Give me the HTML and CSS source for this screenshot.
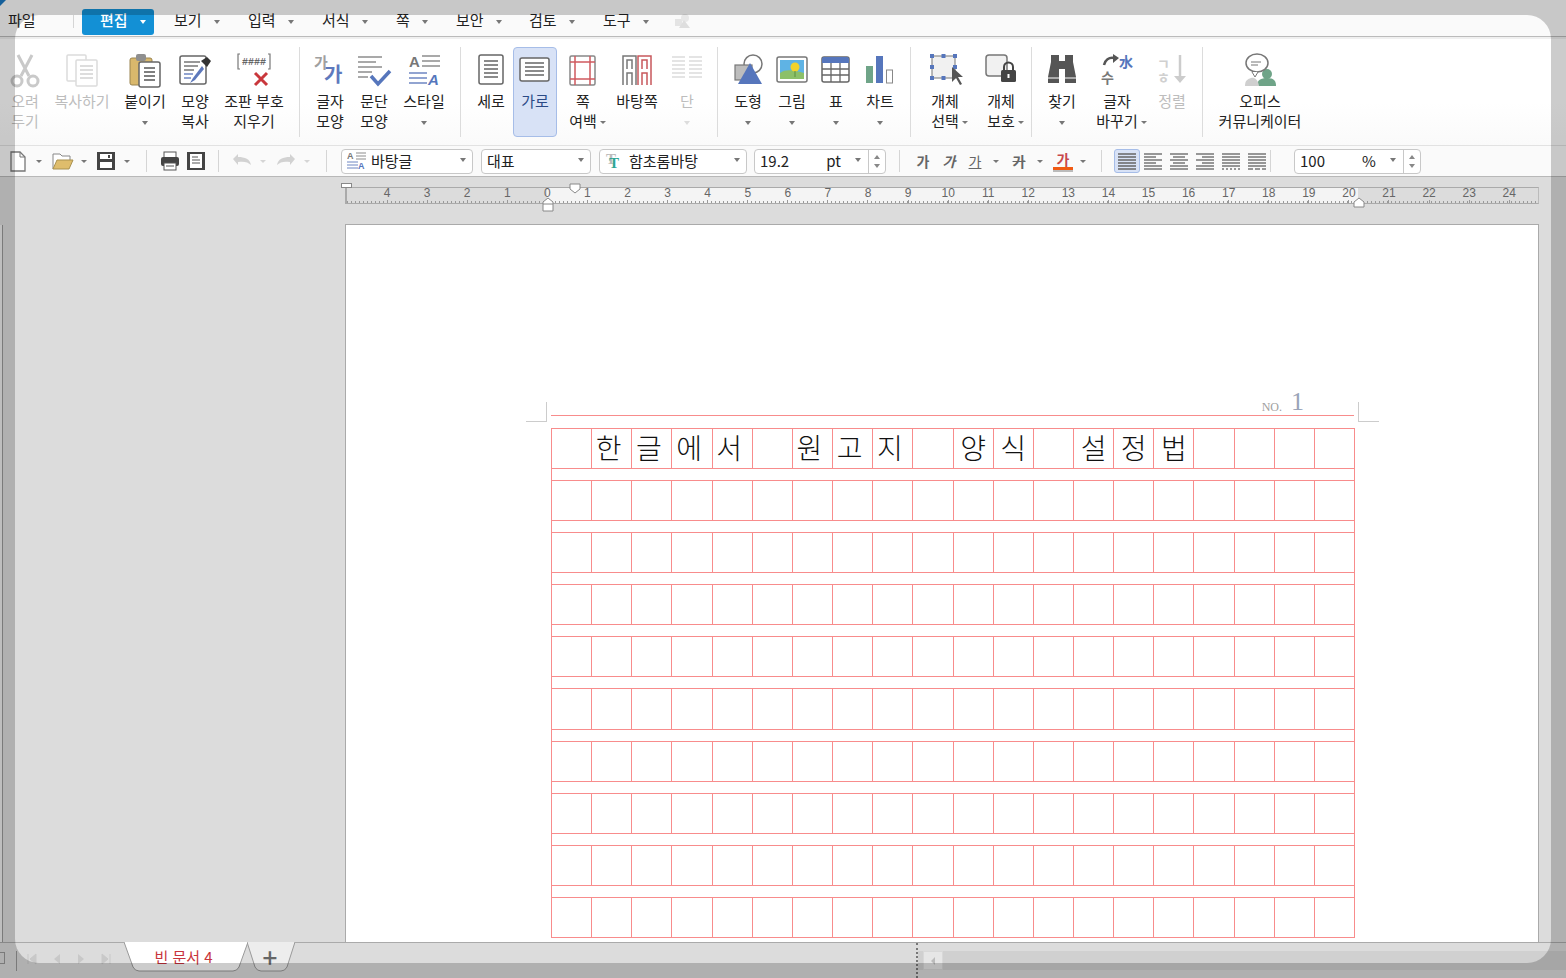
FILE: index.html
```html
<!DOCTYPE html>
<html lang="ko">
<head>
    <meta charset="UTF-8">
    <title>빈 문서 4</title>
    <link rel="stylesheet" href="styles.css">
</head>
<body>
<div class="app">

    <!-- Menu bar -->
    <div class="menu-bar">
        <span class="menu-file">파일</span>
        <span class="menu-sep"></span>
        <span class="menu-active">편집<i class="caret caret-white"></i></span>
        <span class="menu-item">보기<i class="caret"></i></span>
        <span class="menu-item">입력<i class="caret"></i></span>
        <span class="menu-item">서식<i class="caret"></i></span>
        <span class="menu-item menu-short">쪽<i class="caret"></i></span>
        <span class="menu-item menu-mid">보안<i class="caret"></i></span>
        <span class="menu-item">검토<i class="caret"></i></span>
        <span class="menu-item">도구<i class="caret"></i></span>
        <svg class="menu-shapes" viewBox="0 0 18 16"><rect x="1" y="6" width="7" height="7" fill="#e4e4e4"/><circle cx="11" cy="5" r="4" fill="#e8e8e8"/><path d="M10 7l6 8H5z" fill="#dedede"/></svg>
    </div>

    <!-- Ribbon -->
    <div class="ribbon">
        <div class="group group-first">
            <div class="tool w44 off">
                <svg class="ico" viewBox="0 0 36 36" fill="none" stroke="#c9c9c9" stroke-width="3"><path d="M11 3l11 21M25 3L14 24"/><circle cx="10" cy="29" r="5"/><circle cx="26" cy="29" r="5"/></svg>
                <span>오려</span><span>두기</span>
            </div>
            <div class="tool w70 off">
                <svg class="ico" viewBox="0 0 36 36" fill="#fff" stroke="#dcdcdc" stroke-width="1.5"><rect x="3" y="3" width="19" height="26" rx="1"/><rect x="12" y="8" width="21" height="26" rx="1"/><path d="M16 14h13M16 18h13M16 22h13M16 26h13" stroke="#d2d2d2"/></svg>
                <span>복사하기</span>
            </div>
            <div class="tool w56">
                <svg class="ico" viewBox="0 0 36 36"><rect x="3" y="6" width="22" height="27" rx="2" fill="#d9b86c" stroke="#9a8450"/><rect x="9" y="2" width="10" height="7" rx="2" fill="#8f8f8f"/><rect x="12" y="10" width="21" height="25" rx="2" fill="#fff" stroke="#666" stroke-width="1.5"/><path d="M17 16h11M17 20h11M17 24h11M17 28h11" stroke="#555" stroke-width="1.5"/></svg>
                <span>붙이기</span><i class="caret caret-row"></i>
            </div>
            <div class="tool w44">
                <svg class="ico" viewBox="0 0 36 36"><rect x="3" y="4" width="26" height="28" rx="2" fill="#fff" stroke="#666" stroke-width="1.5"/><path d="M7 10h16M7 14h14M7 18h10" stroke="#777" stroke-width="1.5"/><path d="M7 22h9M7 26h7" stroke="#6f86c2" stroke-width="1.5"/><path d="M25 14l-9 12-3 5 5-3 9-11z" fill="#5d78bb"/><path d="M24 9l6-4 4 4-4 6z" fill="#333"/></svg>
                <span>모양</span><span>복사</span>
            </div>
            <div class="tool w74">
                <svg class="ico ico-wide" viewBox="0 0 38 36"><path d="M5 17H3V2h2M33 17h2V2h-2" fill="none" stroke="#777" stroke-width="1.2"/><text x="19" y="13" class="ico-hash">####</text><path d="M20 21l12 12M32 21L20 33" stroke="#c9373c" stroke-width="3"/></svg>
                <span>조판 부호</span><span>지우기</span>
            </div>
        </div>
        <div class="group">
            <div class="tool w44">
                <svg class="ico" viewBox="0 0 36 36"><text x="2" y="16" class="ico-ga" fill="#a0a0a0">가</text><text x="12" y="30" class="ico-ga ico-ga-big" fill="#5e79bd">가</text></svg>
                <span>글자</span><span>모양</span>
            </div>
            <div class="tool w44">
                <svg class="ico" viewBox="0 0 36 36" fill="none"><path d="M2 5h24M2 10h18M2 15h24M2 20h14M2 25h10" stroke="#8d8d8d" stroke-width="1.5"/><path d="M15 24l7 8 12-13" stroke="#5676bc" stroke-width="3.5"/></svg>
                <span>문단</span><span>모양</span>
            </div>
            <div class="tool w56">
                <svg class="ico" viewBox="0 0 36 36"><text x="3" y="15" class="ico-a" fill="#777">A</text><path d="M16 4h18M16 9h18M16 14h18" stroke="#8d8d8d" stroke-width="1.5"/><path d="M3 21h18M3 26h18M3 31h18" stroke="#6f86c2" stroke-width="1.5"/><text x="22" y="33" class="ico-a ico-it" fill="#5676bc">A</text></svg>
                <span>스타일</span><i class="caret caret-row"></i>
            </div>
        </div>
        <div class="group group-page">
            <div class="tool w44">
                <svg class="ico" viewBox="0 0 36 36"><rect x="6" y="3" width="24" height="29" rx="2" fill="#fff" stroke="#666" stroke-width="1.5"/><path d="M11 9h14M11 13h14M11 17h14M11 21h14M11 25h14" stroke="#666" stroke-width="1.5"/></svg>
                <span>세로</span>
            </div>
            <div class="tool w44 on">
                <svg class="ico" viewBox="0 0 36 36"><rect x="3" y="6" width="29" height="23" rx="2" fill="#fff" stroke="#666" stroke-width="1.5"/><path d="M8 11h19M8 15h19M8 19h19M8 23h19" stroke="#666" stroke-width="1.5"/></svg>
                <span>가로</span>
            </div>
            <div class="tool w44 after-on">
                <svg class="ico" viewBox="0 0 36 36" fill="none"><rect x="5" y="4" width="25" height="29" rx="1.5" fill="#fff" stroke="#888" stroke-width="1.5"/><path d="M10 4v29M25 4v29M5 10h25M5 27h25" stroke="#cf5a5f" stroke-width="1.5"/></svg>
                <span>쪽</span><span>여백<i class="caret caret-inline"></i></span>
            </div>
            <div class="tool w60">
                <svg class="ico" viewBox="0 0 36 36" fill="none"><path d="M4 33V4h13v29M8 33V21h5v12M8 17V8h5v9" stroke="#777" stroke-width="1.5"/><path d="M19 33V4h13v29M23 33V21h5v12M23 17V8h5v9" stroke="#c8585c" stroke-width="1.5"/></svg>
                <span>바탕쪽</span>
            </div>
            <div class="tool w40 off">
                <svg class="ico" viewBox="0 0 36 36"><path d="M3 5h13M3 9h13M3 13h13M3 17h13M3 21h13M3 25h13M20 5h13M20 9h13M20 13h13M20 17h13M20 21h13M20 25h13" stroke="#dcdcdc" stroke-width="1.5"/></svg>
                <span>단</span><i class="caret caret-row caret-off"></i>
            </div>
        </div>
        <div class="group">
            <div class="tool w44">
                <svg class="ico" viewBox="0 0 36 36"><circle cx="23" cy="12" r="9" fill="#fff" stroke="#777" stroke-width="1.5"/><rect x="5" y="13" width="17" height="15" fill="#bdbdbd" stroke="#777" stroke-width="1.2"/><path d="M20 11l12 21H8z" fill="#5676bc"/></svg>
                <span>도형</span><i class="caret caret-row"></i>
            </div>
            <div class="tool w44">
                <svg class="ico" viewBox="0 0 36 36"><rect x="3" y="5" width="30" height="25" rx="2" fill="#fff" stroke="#777" stroke-width="1.5"/><rect x="6" y="8" width="24" height="19" fill="#5fb3e4"/><path d="M6 27v-6c6-4 12-3 24 0v6z" fill="#8cc069"/><circle cx="21" cy="15" r="4.5" fill="#f4d22a"/><path d="M21 19v6" stroke="#5d8f3e"/></svg>
                <span>그림</span><i class="caret caret-row"></i>
            </div>
            <div class="tool w44">
                <svg class="ico" viewBox="0 0 36 36"><rect x="4" y="5" width="27" height="25" rx="2" fill="#fff" stroke="#666" stroke-width="1.5"/><path d="M4 7a2 2 0 012-2h23a2 2 0 012 2v4H4z" fill="#5676bc"/><path d="M4 17h27M4 23h27M13 11v19M22 11v19" stroke="#666" stroke-width="1.3"/></svg>
                <span>표</span><i class="caret caret-row"></i>
            </div>
            <div class="tool w44">
                <svg class="ico" viewBox="0 0 36 36"><rect x="4" y="14" width="7" height="17" fill="#6fa488"/><rect x="14" y="4" width="7" height="27" fill="#5676bc"/><rect x="24.500" y="18" width="6" height="13" fill="#fff" stroke="#888"/></svg>
                <span>차트</span><i class="caret caret-row"></i>
            </div>
        </div>
        <div class="group group-tight">
            <div class="tool w56">
                <svg class="ico" viewBox="0 0 36 36"><rect x="5" y="4" width="23" height="22" fill="#f1f1f1" stroke="#777"/><path d="M3 2h4v4H3zM14.500 2h4v4h-4zM26 2h4v4h-4zM3 13h4v4H3zM26 13h4v4h-4zM3 24h4v4H3zM14.500 24h4v4h-4z" fill="#5676bc"/><path d="M25 15v15l4-4 4 7 2-1-4-7h5z" fill="#555"/></svg>
                <span>개체</span><span>선택<i class="caret caret-inline"></i></span>
            </div>
            <div class="tool w56">
                <svg class="ico" viewBox="0 0 36 36"><rect x="3" y="3" width="21" height="21" rx="3" fill="#f1f1f1" stroke="#777" stroke-width="1.5"/><rect x="18" y="18" width="15" height="12" rx="1.5" fill="#444"/><path d="M21 18v-3a4.500 4.500 0 019 0v3" fill="none" stroke="#444" stroke-width="2"/><rect x="24.500" y="22" width="2" height="4" fill="#fff"/></svg>
                <span>개체</span><span>보호<i class="caret caret-inline"></i></span>
            </div>
        </div>
        <div class="group">
            <div class="tool w44">
                <svg class="ico" viewBox="0 0 36 36" fill="#555"><path d="M7 3h8v6h6V3h8v7l3 15v6H21V17h-6v14H4v-6l3-15z"/><path d="M4 26h11M21 26h11" stroke="#fff"/></svg>
                <span>찾기</span><i class="caret caret-row"></i>
            </div>
            <div class="tool w66">
                <svg class="ico" viewBox="0 0 36 36"><path d="M5 13c1-5 5-8 10-7" fill="none" stroke="#555" stroke-width="2.500"/><path d="M14 2l6 4-6 5z" fill="#555"/><text x="20" y="15" class="ico-ji" fill="#5676bc">水</text><text x="2" y="31" class="ico-ji" fill="#777">수</text></svg>
                <span>글자</span><span>바꾸기<i class="caret caret-inline"></i></span>
            </div>
            <div class="tool w44 off">
                <svg class="ico" viewBox="0 0 36 36"><text x="3" y="17" class="ico-ji" fill="#d0d0d0">ㄱ</text><text x="3" y="31" class="ico-ji" fill="#d0d0d0">ㅎ</text><path d="M26 3v24" stroke="#ccc" stroke-width="2.500"/><path d="M20 24h12l-6 7z" fill="#ccc"/></svg>
                <span>정렬</span>
            </div>
        </div>
        <div class="group group-last">
            <div class="tool w100">
                <svg class="ico" viewBox="0 0 36 36"><circle cx="25" cy="22" r="5" fill="#6fa488"/><path d="M15 34c0-6 4-8 10-8s9 2 9 8z" fill="#6fa488"/><path d="M3 34c0-6 3-7 6-8s7 1 8 8z" fill="#cfcfcf"/><ellipse cx="15" cy="11" rx="11" ry="9" fill="#fff" stroke="#777" stroke-width="1.5"/><path d="M10 20l3 5 3-5" fill="#fff" stroke="#777"/><path d="M9 10h10M9 13h7" stroke="#777"/></svg>
                <span>오피스</span><span>커뮤니케이터</span>
            </div>
        </div>
    </div>

    <!-- Formatting toolbar -->
    <div class="toolbar">
        <svg class="tb-ico" viewBox="0 0 22 22"><path d="M4 2h9l5 5v14H4z" fill="#fff" stroke="#777" stroke-width="1.3"/><path d="M13 2v5h5" fill="none" stroke="#777"/></svg>
        <i class="tb-caret"></i>
        <svg class="tb-ico tb-open" viewBox="0 0 22 22"><path d="M1 19V4h7l2 2h8v4" fill="#fff" stroke="#888"/><path d="M1 19l4-9h16l-4 9z" fill="#dfbd6c" stroke="#a9914f"/></svg>
        <i class="tb-caret"></i>
        <svg class="tb-ico tb-save" viewBox="0 0 22 22"><path d="M2 2h18v18H2z" fill="#444"/><rect x="5" y="12" width="12" height="6" fill="#fff"/><rect x="5" y="4" width="12" height="5" fill="#fff"/><rect x="13" y="5" width="2" height="3" fill="#444"/></svg>
        <i class="tb-caret"></i>
        <span class="tb-sep tb-sep-file"></span>
        <svg class="tb-ico" viewBox="0 0 22 22"><rect x="5" y="2" width="12" height="6" fill="#fff" stroke="#555"/><rect x="2" y="7" width="18" height="9" rx="2" fill="#444"/><rect x="5" y="13" width="12" height="7" fill="#fff" stroke="#555"/><path d="M7 16h8" stroke="#555"/></svg>
        <svg class="tb-ico tb-mini" viewBox="0 0 22 22"><rect x="2" y="2" width="18" height="18" fill="#444"/><rect x="5" y="4" width="12" height="14" fill="#fff"/><path d="M7 7h6M7 10h8M7 13h8" stroke="#555"/></svg>
        <span class="tb-sep tb-sep-print"></span>
        <svg class="tb-ico" viewBox="0 0 22 22"><path d="M2 9l5-5v3c7 0 12 2 13 8-3-3-7-4-13-3v3z" fill="#d2d2d2"/></svg>
        <i class="tb-caret tb-caret-off"></i>
        <svg class="tb-ico tb-redo" viewBox="0 0 22 22"><path d="M20 9l-5-5v3C8 7 3 9 2 15c3-3 7-4 13-3v3z" fill="#d2d2d2"/></svg>
        <i class="tb-caret tb-caret-off"></i>
        <span class="tb-sep tb-sep-sel"></span>

        <div class="select sel-style">
            <svg class="sel-ico" viewBox="0 0 20 20"><text x="0" y="9" class="ico-small" fill="#777">A</text><path d="M9 3h10M9 6h10M9 9h10" stroke="#8d8d8d"/><path d="M0 12h11M0 15h11M0 18h11" stroke="#6f86c2"/><text x="11" y="19" class="ico-small ico-it" fill="#5676bc">A</text></svg>
            <span class="sel-text">바탕글</span><i class="caret"></i>
        </div>
        <div class="select sel-rep">
            <span class="sel-text">대표</span><i class="caret"></i>
        </div>
        <div class="select sel-font">
            <svg class="sel-ico" viewBox="0 0 20 20"><text x="1" y="14" class="ico-t" fill="#bcbcbc">T</text><text x="4" y="18" class="ico-t" fill="#2ea594">T</text></svg>
            <span class="sel-text">함초롬바탕</span><i class="caret"></i>
        </div>
        <div class="select sel-size">
            <span class="sel-text">19.2</span><span class="sel-unit">pt</span><i class="caret"></i>
            <span class="spin"><i class="spin-up"></i><i class="spin-down"></i></span>
        </div>
        <span class="tb-sep tb-sep-fmt"></span>

        <span class="fmt fmt-bold">가</span>
        <span class="fmt fmt-italic">가</span>
        <span class="fmt fmt-under">가</span>
        <i class="tb-caret tb-caret-tight"></i>
        <span class="fmt fmt-strike">가</span>
        <i class="tb-caret tb-caret-tight"></i>
        <span class="fmt fmt-color">가</span>
        <i class="tb-caret"></i>
        <span class="tb-sep tb-sep-align"></span>

        <span class="align-btn align-on"><svg viewBox="0 0 20 18"><path d="M1 2h18M1 5h18M1 8h18M1 11h18M1 14h18M1 17h18" stroke="#666" stroke-width="1.6"/></svg></span>
        <span class="align-btn"><svg viewBox="0 0 20 18"><path d="M1 2h18M1 5h12M1 8h18M1 11h12M1 14h18M1 17h18" stroke="#777" stroke-width="1.6"/></svg></span>
        <span class="align-btn"><svg viewBox="0 0 20 18"><path d="M1 2h18M4 5h12M1 8h18M4 11h12M1 14h18M1 17h18" stroke="#777" stroke-width="1.6"/></svg></span>
        <span class="align-btn"><svg viewBox="0 0 20 18"><path d="M1 2h18M7 5h12M1 8h18M7 11h12M1 14h18M1 17h18" stroke="#777" stroke-width="1.6"/></svg></span>
        <span class="align-btn"><svg viewBox="0 0 20 18"><path d="M1 2h18M1 5h18M1 8h18M1 11h18M1 14h18" stroke="#777" stroke-width="1.6"/><path d="M1 17h18" stroke="#777" stroke-width="1.6" stroke-dasharray="2 2"/></svg></span>
        <span class="align-btn"><svg viewBox="0 0 20 18"><path d="M1 2h18M1 5h18M1 8h18M1 11h18M1 14h18" stroke="#777" stroke-width="1.6"/><path d="M1 17h18" stroke="#777" stroke-width="1.6" stroke-dasharray="5 2"/></svg></span>
        <span class="tb-sep tb-sep-zoom"></span>

        <div class="select sel-zoom">
            <span class="sel-text">100</span><span class="sel-unit">%</span><i class="caret"></i>
            <span class="spin"><i class="spin-up"></i><i class="spin-down"></i></span>
        </div>
    </div>

    <!-- Document area -->
    <div class="workspace">
        <div class="vruler"></div>
        <div class="ruler">
            <span>4</span><span>3</span><span>2</span><span>1</span><span>0</span><span>1</span><span>2</span><span>3</span><span>4</span><span>5</span><span>6</span><span>7</span><span>8</span><span>9</span><span>10</span><span>11</span><span>12</span><span>13</span><span>14</span><span>15</span><span>16</span><span>17</span><span>18</span><span>19</span><span>20</span><span>21</span><span>22</span><span>23</span><span>24</span>
            <i class="mark mark-tl"></i>
            <svg class="mark mark-indent" viewBox="0 0 12 11"><path d="M1 1h10v5l-5 4-5-4z" fill="#fff" stroke="#888"/></svg>
            <svg class="mark mark-left" viewBox="0 0 12 15"><path d="M1 14V5l5-4 5 4v9z" fill="#fff" stroke="#888"/><path d="M1 7h10" stroke="#888"/></svg>
            <svg class="mark mark-right" viewBox="0 0 12 11"><path d="M1 10V5l5-4 5 4v5z" fill="#fff" stroke="#888"/></svg>
        </div>
        <div class="tabstops"></div>

        <div class="page">
            <div class="sheet-head">
                <i class="crop crop-left"></i>
                <i class="crop crop-right"></i>
                <span class="no-label">NO.</span><span class="no-value">1</span>
            </div>
            <div class="sheet">
                <div class="row"><span></span><span class="lead">한</span><span class="lead">글</span><span class="lead">에</span><span class="lead">서</span><span></span><span class="lead">원</span><span class="lead">고</span><span class="lead">지</span><span></span><span>양</span><span>식</span><span></span><span>설</span><span>정</span><span>법</span><span></span><span></span><span></span><span></span></div>
                <div class="row"><span></span><span></span><span></span><span></span><span></span><span></span><span></span><span></span><span></span><span></span><span></span><span></span><span></span><span></span><span></span><span></span><span></span><span></span><span></span><span></span></div>
                <div class="row"><span></span><span></span><span></span><span></span><span></span><span></span><span></span><span></span><span></span><span></span><span></span><span></span><span></span><span></span><span></span><span></span><span></span><span></span><span></span><span></span></div>
                <div class="row"><span></span><span></span><span></span><span></span><span></span><span></span><span></span><span></span><span></span><span></span><span></span><span></span><span></span><span></span><span></span><span></span><span></span><span></span><span></span><span></span></div>
                <div class="row"><span></span><span></span><span></span><span></span><span></span><span></span><span></span><span></span><span></span><span></span><span></span><span></span><span></span><span></span><span></span><span></span><span></span><span></span><span></span><span></span></div>
                <div class="row"><span></span><span></span><span></span><span></span><span></span><span></span><span></span><span></span><span></span><span></span><span></span><span></span><span></span><span></span><span></span><span></span><span></span><span></span><span></span><span></span></div>
                <div class="row"><span></span><span></span><span></span><span></span><span></span><span></span><span></span><span></span><span></span><span></span><span></span><span></span><span></span><span></span><span></span><span></span><span></span><span></span><span></span><span></span></div>
                <div class="row"><span></span><span></span><span></span><span></span><span></span><span></span><span></span><span></span><span></span><span></span><span></span><span></span><span></span><span></span><span></span><span></span><span></span><span></span><span></span><span></span></div>
                <div class="row"><span></span><span></span><span></span><span></span><span></span><span></span><span></span><span></span><span></span><span></span><span></span><span></span><span></span><span></span><span></span><span></span><span></span><span></span><span></span><span></span></div>
                <div class="row"><span></span><span></span><span></span><span></span><span></span><span></span><span></span><span></span><span></span><span></span><span></span><span></span><span></span><span></span><span></span><span></span><span></span><span></span><span></span><span></span></div>
            </div>
        </div>
    </div>

    <!-- Tabs and horizontal scrollbar -->
    <div class="bottom-bar">
        <div class="tab-area">
            <span class="corner-box"></span>
            <span class="tab-nav-line"></span>
            <div class="tab-nav">
                <svg viewBox="0 0 10 12"><path d="M1 1v10M9 1L3 6l6 5z" fill="#c8c8c8" stroke="#c8c8c8"/></svg>
                <svg viewBox="0 0 10 12"><path d="M8 1L2 6l6 5z" fill="#c8c8c8"/></svg>
                <svg viewBox="0 0 10 12"><path d="M2 1l6 5-6 5z" fill="#c8c8c8"/></svg>
                <svg viewBox="0 0 10 12"><path d="M9 1v10M1 1l6 5-6 5z" fill="#c8c8c8" stroke="#c8c8c8"/></svg>
            </div>
            <div class="doc-tab">
                <svg class="tab-shape" viewBox="0 0 124 30"><path d="M0 0l9 25q2 4 6 4h94q4 0 6-4l9-25" fill="#fff" stroke="#999"/></svg>
                <span>빈 문서 4</span>
            </div>
            <div class="add-tab">
                <svg class="tab-shape" viewBox="0 0 48 30"><path d="M0 0l8 25q2 4 6 4h20q4 0 6-4l8-25" fill="#ededed" stroke="#999"/></svg>
                <span>+</span>
            </div>
        </div>
        <span class="splitter"></span>
        <div class="hscroll">
            <span class="scroll-btn"><i></i></span>
        </div>
    </div>

    <svg class="corner-logo" viewBox="0 0 6 6"><path d="M0 0h6L0 6z" fill="#1b78c2"/></svg>
    <div class="frame"></div>
</div>
</body>
</html>
```

FILE: styles.css
```css
/* Reset */
* {
    margin: 0;
    padding: 0;
    box-sizing: border-box;
}

html, body {
    height: 100%;
    overflow: hidden;
}

body {
    font-family: "Noto Sans CJK KR", "Noto Sans", sans-serif;
    font-size: 15px;
    color: #222;
}

i {
    font-style: normal;
}

.app {
    position: relative;
    height: 100vh;
    display: flex;
    flex-direction: column;
    overflow: hidden;
    background-color: #dcdcdc;
}

/* Dimmed frame laid over the window edge */
.frame {
    position: absolute;
    top: 15px;
    left: 15px;
    right: 15px;
    bottom: 15px;
    border-radius: 24px;
    box-shadow: 0 0 0 60px rgba(0, 0, 0, 0.2);
    pointer-events: none;
}

.corner-logo {
    position: absolute;
    top: 0;
    left: 0;
    width: 6px;
    height: 6px;
}

/* Carets */
.caret {
    display: inline-block;
    width: 0;
    height: 0;
    border-left: 3.5px solid transparent;
    border-right: 3.5px solid transparent;
    border-top: 4px solid #777;
}

.caret-white {
    border-top-color: #fff;
    margin-left: 12px;
}

.caret-row {
    margin-top: 10px;
}

.caret-off {
    border-top-color: #ddd;
}

/* Hangs past the label so the label stays centred */
.caret-inline {
    margin: 0 -9px 0 3px;
    vertical-align: middle;
    border-left-width: 3px;
    border-right-width: 3px;
    border-top-width: 3px;
}

/* Menu bar */
.menu-bar {
    height: 37px;
    flex-shrink: 0;
    display: flex;
    align-items: flex-start;
    padding: 9px 0 0 8px;
    background-color: #fafafa;
    border-bottom: 1px solid #bbb;
    line-height: 22px;
}

.menu-file {
    width: 65px;
}

.menu-sep {
    width: 1px;
    height: 13px;
    margin-top: 6px;
    background-color: #d5d5d5;
}

.menu-active {
    width: 72px;
    height: 26px;
    margin: 0 20px 0 8px;
    padding-left: 18px;
    background-color: #1390d5;
    border-radius: 3px;
    color: #fff;
    font-weight: 500;
}

.menu-active .caret {
    vertical-align: middle;
}

.menu-item {
    width: 74px;
}

.menu-item .caret {
    margin-left: 12px;
    vertical-align: middle;
}

.menu-short {
    width: 60px;
}

.menu-mid {
    width: 73px;
}

.menu-shapes {
    width: 18px;
    height: 16px;
    margin: 4px 0 0 -3px;
}

/* Ribbon */
.ribbon {
    height: 109px;
    flex-shrink: 0;
    display: flex;
    padding-top: 8px;
    background: linear-gradient(#fff, #fff 60%, #fafafa);
    border-top: 2px solid #f0f0f0;
    border-bottom: 1px solid #e2e2e2;
}

.group {
    height: 90px;
    display: flex;
    padding: 0 8px;
    border-right: 1px solid #dcdcdc;
}

.group-first {
    padding-left: 3px;
}

.group-page {
    padding-right: 10px;
}

.group-tight {
    padding: 0 2px 0 6px;
}

.group-last {
    padding-left: 7px;
    border-right: none;
}

.tool {
    display: flex;
    flex-direction: column;
    align-items: center;
    height: 90px;
    padding-top: 4px;
    line-height: 20px;
    white-space: nowrap;
    border-radius: 4px;
    border: 1px solid transparent;
}

.ico {
    width: 36px;
    height: 36px;
    flex-shrink: 0;
    margin-bottom: 3px;
}

.ico-wide {
    width: 38px;
}

.ico-hash {
    font: bold 10px "Liberation Mono", monospace;
    fill: #666;
    text-anchor: middle;
}

.ico-ga {
    font: bold 15px "Noto Sans CJK KR", sans-serif;
}

.ico-ga-big {
    font-size: 20px;
}

.ico-a {
    font: bold 15px "Liberation Sans", sans-serif;
}

.ico-it {
    font-style: italic;
}

.ico-ji {
    font: bold 14px "Noto Sans CJK KR", sans-serif;
}

.ico-small {
    font: bold 9px "Liberation Sans", sans-serif;
}

.ico-t {
    font: bold 15px "Liberation Serif", serif;
}

.w40 { width: 40px; }
.w44 { width: 44px; }
.w56 { width: 56px; }
.w60 { width: 60px; }
.w66 { width: 66px; }
.w70 { width: 70px; }
.w74 { width: 74px; }
.w100 { width: 100px; }

.off {
    color: #bdbdbd;
}

.on {
    background-color: #d8e2f6;
    border-color: #a6bde8;
    color: #2b4a86;
}

.after-on {
    margin-left: 4px;
    margin-right: 2px;
}

/* Toolbar */
.toolbar {
    height: 31px;
    flex-shrink: 0;
    display: flex;
    align-items: center;
    padding-left: 7px;
    background-color: #fafafa;
    border-bottom: 1px solid #b8b8b8;
}

.tb-ico {
    width: 22px;
    height: 22px;
    flex-shrink: 0;
}

.tb-open {
    margin-left: 3px;
}

.tb-save {
    margin-left: 1px;
}

.tb-mini {
    margin-left: 4px;
}

.tb-redo {
    margin-left: 2px;
}

.tb-caret {
    width: 0;
    height: 0;
    flex-shrink: 0;
    margin: 0 7px;
    border-left: 3px solid transparent;
    border-right: 3px solid transparent;
    border-top: 3px solid #777;
}

.tb-caret-tight {
    margin: 0 7px 0 5px;
}

.tb-caret-off {
    border-top-color: #d5d5d5;
}

.tb-sep {
    width: 1px;
    height: 22px;
    flex-shrink: 0;
    background-color: #d5d5d5;
}

.tb-sep-file {
    margin: 0 12px 0 9px;
}

.tb-sep-print {
    margin: 0 12px 0 11px;
}

.tb-sep-sel {
    margin: 0 14px 0 9px;
}

.tb-sep-fmt {
    margin: 0 10px 0 13px;
}

.tb-sep-align {
    margin: 0 12px 0 8px;
}

.tb-sep-zoom {
    margin: 0 23px 0 0;
}

.select {
    height: 25px;
    flex-shrink: 0;
    display: flex;
    align-items: center;
    padding: 0 6px 2px 5px;
    margin-right: 8px;
    background-color: #fff;
    border: 1px solid #c8c8c8;
    border-radius: 4px;
}

.select > .caret {
    margin-left: auto;
}

.sel-ico {
    width: 20px;
    height: 20px;
    margin-right: 4px;
    flex-shrink: 0;
}

.sel-style { width: 132px; }
.sel-rep { width: 110px; }
.sel-font { width: 148px; margin-right: 7px; }

.sel-size {
    width: 132px;
    padding-right: 0;
    margin-right: 0;
}

.sel-zoom {
    width: 127px;
    padding-right: 0;
    margin-right: 0;
}

.sel-unit {
    margin-left: 37px;
}

.sel-size > .caret,
.sel-zoom > .caret {
    margin-right: 7px;
}

.spin {
    width: 17px;
    height: 23px;
    margin-bottom: -2px;
    display: flex;
    flex-direction: column;
    align-items: center;
    justify-content: center;
    gap: 5px;
    border-left: 1px solid #c8c8c8;
}

.spin-up, .spin-down {
    width: 0;
    height: 0;
    border-left: 3px solid transparent;
    border-right: 3px solid transparent;
}

.spin-up {
    border-bottom: 4px solid #888;
}

.spin-down {
    border-top: 4px solid #888;
}

.fmt {
    width: 26px;
    flex-shrink: 0;
    text-align: center;
    font-size: 14px;
    font-weight: 700;
    color: #666;
}

.fmt-italic {
    font-style: italic;
}

.fmt-under {
    text-decoration: underline;
    font-weight: 400;
}

.fmt-strike {
    text-decoration: line-through;
}

.fmt-color {
    width: 20px;
    margin-left: 3px;
    color: #c8484c;
    line-height: 15px;
    border-bottom: 3px solid #f05a14;
    box-shadow: 0 2px 0 #bbb;
}

.align-btn {
    width: 26px;
    height: 24px;
    flex-shrink: 0;
    display: flex;
    align-items: center;
    justify-content: center;
    border: 1px solid transparent;
    border-radius: 3px;
}

.align-btn svg {
    width: 20px;
    height: 18px;
}

.align-on {
    background-color: #d8e2f6;
    border-color: #a6bde8;
}

/* Workspace */
.workspace {
    position: relative;
    flex-grow: 1;
    min-height: 0;
    display: flex;
    flex-direction: column;
    padding: 10px 0 0 345px;
    background-color: #dcdcdc;
}

.vruler {
    position: absolute;
    top: 48px;
    bottom: 0;
    left: 0;
    width: 3px;
    background-color: #eee;
    border-right: 1px solid #999;
}

.ruler {
    position: relative;
    width: 1194px;
    height: 17px;
    flex-shrink: 0;
    display: flex;
    padding-left: 20px;
    border-top: 1px solid #aaa;
    border-bottom: 1px solid #aaa;
    border-left: 2px solid #aaa;
    border-right: 1px solid #bbb;
    background:
        repeating-linear-gradient(90deg, #999 0, #999 1px, transparent 1px, transparent 4px) 0 100% / 100% 2px no-repeat,
        linear-gradient(90deg, #dcdcdc 200px, #f4f4f4 200px, #f4f4f4 1011px, #dcdcdc 1011px);
}

.ruler span {
    width: 40.08px;
    flex-shrink: 0;
    text-align: center;
    font: 12px/10px "Liberation Sans", sans-serif;
    color: #666;
    background: linear-gradient(#999, #999) 50% 100% / 1px 3px no-repeat;
}

.mark {
    position: absolute;
    display: block;
}

.mark-tl {
    top: -5px;
    left: -6px;
    width: 11px;
    height: 5px;
    background-color: #fff;
    border: 1px solid #888;
}

.mark-indent {
    top: -5px;
    left: 222px;
    width: 12px;
    height: 11px;
}

.mark-left {
    top: 9px;
    left: 195px;
    width: 12px;
    height: 15px;
}

.mark-right {
    top: 9px;
    left: 1006px;
    width: 12px;
    height: 11px;
}

.tabstops {
    width: 812px;
    height: 7px;
    flex-shrink: 0;
    margin-left: 202px;
    background: repeating-linear-gradient(90deg, transparent 0, transparent 56.7px, #aaa 56.7px, #aaa 57.7px);
    background-size: 56.7px 100%;
}

.page {
    flex-grow: 1;
    width: 1194px;
    min-height: 0;
    margin-top: 13px;
    overflow: hidden;
    background-color: #fff;
    border: 1px solid #aaa;
    border-bottom: none;
}

/* Manuscript sheet */
.sheet-head {
    position: relative;
    width: 803px;
    height: 191px;
    margin-left: 205px;
    display: flex;
    justify-content: flex-end;
    align-items: flex-end;
    padding-right: 50px;
    border-bottom: 1px solid #f88c8c;
    font-family: "Liberation Serif", serif;
    color: #a0a0a0;
}

.no-label {
    font-size: 12px;
    line-height: 15px;
    margin-right: 9px;
}

.no-value {
    font-size: 26px;
    line-height: 26px;
    color: #9aa4b8;
}

.crop {
    position: absolute;
    top: 177px;
    width: 21px;
    height: 20px;
    border-bottom: 1px solid #ccc;
}

.crop-left {
    left: -25px;
    border-right: 1px solid #ccc;
}

.crop-right {
    right: -25px;
    border-left: 1px solid #ccc;
}

.sheet {
    width: 804px;
    margin: 12px 0 0 205px;
    border-left: 1px solid #f88c8c;
    border-right: 1px solid #f88c8c;
}

/* Row spans one cell border past the sheet so columns start on the left line */
.row {
    height: 41.1px;
    margin: 0 0 11px -1px;
    width: 803px;
    display: grid;
    grid-template-columns: repeat(20, 1fr);
    border-top: 1px solid #f88c8c;
    border-bottom: 1px solid #f88c8c;
}

.row span {
    display: flex;
    align-items: center;
    justify-content: center;
    padding-bottom: 3px;
    border-left: 1px solid #f88c8c;
    font-size: 28px;
    font-weight: 300;
    line-height: 1;
    color: #111;
}

.row .lead {
    padding-right: 6px;
}

/* Bottom bar */
.bottom-bar {
    height: 36px;
    flex-shrink: 0;
    display: flex;
    background-color: #dcdcdc;
    border-top: 1px solid #aaa;
}

.tab-area {
    position: relative;
    width: 916px;
    display: flex;
    padding-left: 27px;
}

.corner-box {
    position: absolute;
    top: 9px;
    left: 0;
    width: 5px;
    height: 12px;
    border: 1px solid #999;
    border-left: none;
}

.tab-nav-line {
    position: absolute;
    top: 8px;
    left: 16px;
    width: 1px;
    height: 20px;
    background-color: #999;
}

.tab-nav {
    width: 97px;
    display: flex;
    align-items: flex-start;
    gap: 14.5px;
    padding-top: 10px;
}

.tab-nav svg {
    width: 10px;
    height: 12px;
}

.doc-tab, .add-tab {
    position: relative;
    height: 30px;
    text-align: center;
}

.doc-tab {
    width: 124px;
    padding: 3px 5px 0 0;
    color: #c8343c;
    line-height: 22px;
}

.add-tab {
    width: 48px;
    margin-left: -1px;
    padding-right: 2px;
    color: #666;
    font-size: 26px;
    font-weight: 500;
    line-height: 27px;
}

.tab-shape {
    position: absolute;
    top: -1px;
    left: 0;
    width: 100%;
    height: 30px;
}

.doc-tab span, .add-tab span {
    position: relative;
}

.splitter {
    width: 2px;
    border-left: 2px dotted #777;
}

.hscroll {
    flex-grow: 1;
    margin-top: 8px;
    height: 19px;
    padding-left: 5px;
    background-color: #d0d0d0;
}

.scroll-btn {
    display: flex;
    align-items: center;
    justify-content: center;
    width: 20px;
    height: 19px;
    background-color: #e6e6e6;
    border: 1px solid #d8d8d8;
}

.scroll-btn i {
    width: 0;
    height: 0;
    border-top: 4px solid transparent;
    border-bottom: 4px solid transparent;
    border-right: 4px solid #bbb;
}
```
